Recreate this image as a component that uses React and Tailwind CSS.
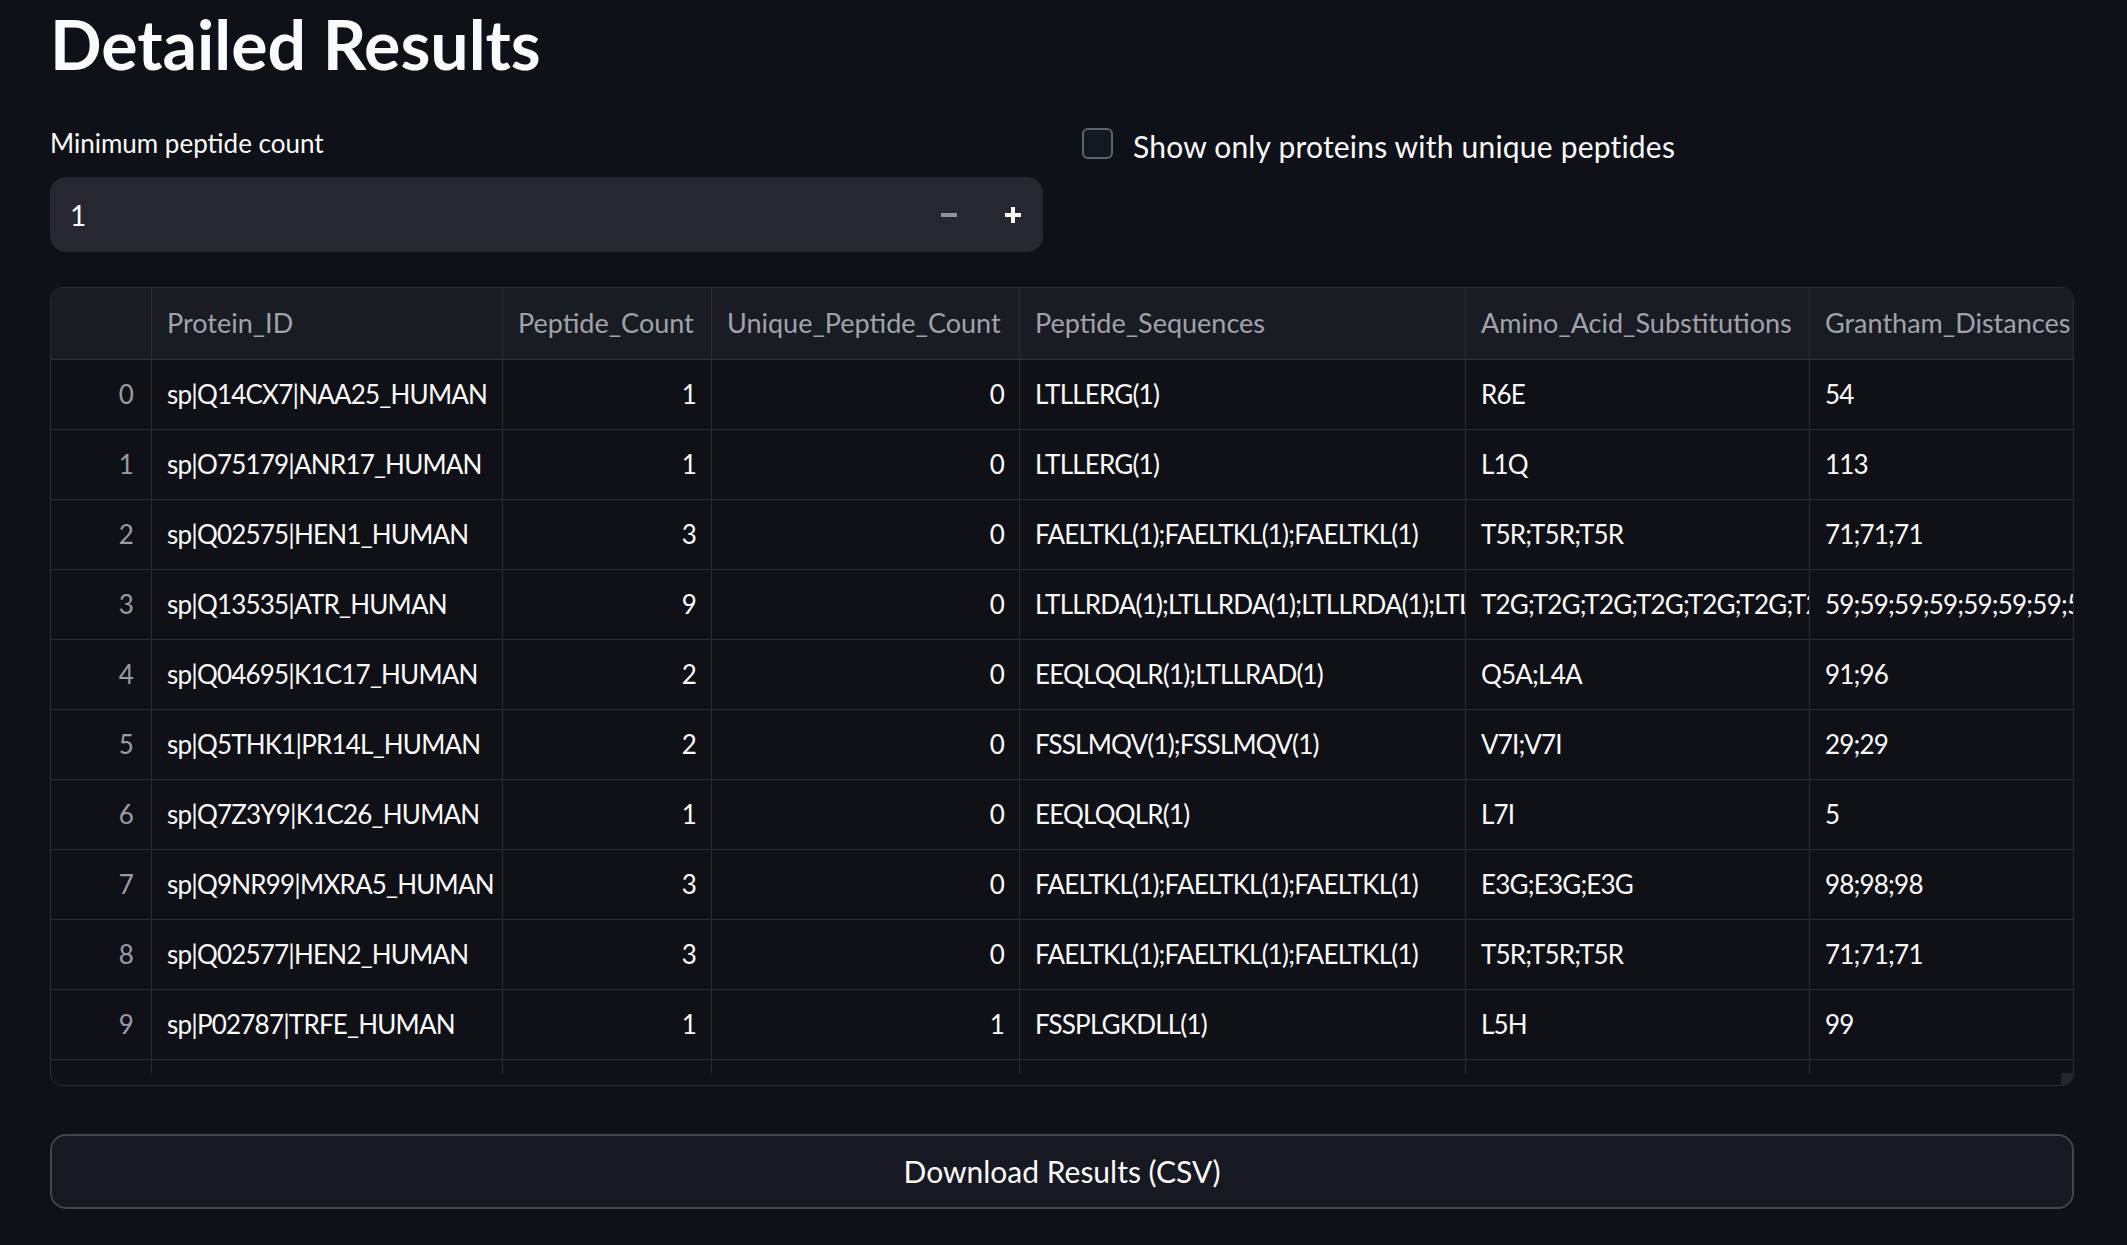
import React from 'react';

const COLUMNS = [
  { key: 'idx', label: '', width: 'w-[101px]', align: 'right' },
  { key: 'protein', label: 'Protein_ID', width: 'w-[351px]' },
  { key: 'count', label: 'Peptide_Count', width: 'w-[209px]', align: 'right' },
  { key: 'unique', label: 'Unique_Peptide_Count', width: 'w-[308px]', align: 'right' },
  { key: 'seqs', label: 'Peptide_Sequences', width: 'w-[446px]' },
  { key: 'subs', label: 'Amino_Acid_Substitutions', width: 'w-[344px]' },
  { key: 'dist', label: 'Grantham_Distances', width: 'w-[263px]' },
];

const rep = (s, n, sep = ';') => Array(n).fill(s).join(sep);

const ROWS = [
  { protein: 'sp|Q14CX7|NAA25_HUMAN', count: 1, unique: 0, seqs: 'LTLLERG(1)', subs: 'R6E', dist: '54' },
  { protein: 'sp|O75179|ANR17_HUMAN', count: 1, unique: 0, seqs: 'LTLLERG(1)', subs: 'L1Q', dist: '113' },
  { protein: 'sp|Q02575|HEN1_HUMAN', count: 3, unique: 0, seqs: rep('FAELTKL(1)', 3), subs: rep('T5R', 3), dist: rep('71', 3) },
  { protein: 'sp|Q13535|ATR_HUMAN', count: 9, unique: 0, seqs: rep('LTLLRDA(1)', 9), subs: rep('T2G', 9), dist: rep('59', 9) },
  { protein: 'sp|Q04695|K1C17_HUMAN', count: 2, unique: 0, seqs: 'EEQLQQLR(1);LTLLRAD(1)', subs: 'Q5A;L4A', dist: '91;96' },
  { protein: 'sp|Q5THK1|PR14L_HUMAN', count: 2, unique: 0, seqs: rep('FSSLMQV(1)', 2), subs: 'V7I;V7I', dist: '29;29' },
  { protein: 'sp|Q7Z3Y9|K1C26_HUMAN', count: 1, unique: 0, seqs: 'EEQLQQLR(1)', subs: 'L7I', dist: '5' },
  { protein: 'sp|Q9NR99|MXRA5_HUMAN', count: 3, unique: 0, seqs: rep('FAELTKL(1)', 3), subs: rep('E3G', 3), dist: rep('98', 3) },
  { protein: 'sp|Q02577|HEN2_HUMAN', count: 3, unique: 0, seqs: rep('FAELTKL(1)', 3), subs: rep('T5R', 3), dist: rep('71', 3) },
  { protein: 'sp|P02787|TRFE_HUMAN', count: 1, unique: 1, seqs: 'FSSPLGKDLL(1)', subs: 'L5H', dist: '99' },
];

const Stepper = () => (
  <div className="flex items-center h-full">
    <button className="w-[68px] h-full flex items-center justify-center">
      <svg width="16" height="4" viewBox="0 0 16 4"><rect width="16" height="4" fill="#8e909b" /></svg>
    </button>
    <button className="w-[60px] h-full flex items-center justify-center">
      <svg width="16" height="16" viewBox="0 0 16 16">
        <rect x="0" y="6" width="16" height="4" fill="#fafafa" />
        <rect x="6" y="0" width="4" height="16" fill="#fafafa" />
      </svg>
    </button>
  </div>
);

const DataTable = () => (
  <div className="w-[2024px] rounded-[12px] border border-[#2b2d34] overflow-hidden bg-[#0f1117]">
    <div className="flex h-[72px] bg-[#1a1c23] border-b border-[#30323a]">
      {COLUMNS.map((c, i) => (
        <div
          key={c.key}
          className={`${c.width} shrink-0 flex items-center px-[15px] overflow-hidden whitespace-nowrap text-[27px] text-[#a0a3ac] ${i < COLUMNS.length - 1 ? 'border-r border-[#2b2d34]' : ''}`}
        >
          {c.label}
        </div>
      ))}
    </div>
    {ROWS.map((r, ri) => (
      <div key={ri} className="flex h-[70px] border-b border-[#2b2d34]">
        {COLUMNS.map((c, i) => {
          const val = c.key === 'idx' ? ri : r[c.key];
          return (
            <div
              key={c.key}
              className={`${c.width} shrink-0 flex items-center overflow-hidden whitespace-nowrap text-[26px] tracking-[-0.8px] ${c.key === 'idx' ? 'pl-[15px] pr-[18px] text-[#9a9ca5]' : 'px-[15px] text-[#fafafa]'} ${c.align === 'right' ? 'justify-end' : ''} ${i < COLUMNS.length - 1 ? 'border-r border-[#2b2d34]' : ''}`}
            >
              {val}
            </div>
          );
        })}
      </div>
    ))}
    <div className="flex h-[13px]">
      {COLUMNS.map((c, i) => (
        <div key={c.key} className={`${c.width} shrink-0 ${i < COLUMNS.length - 1 ? 'border-r border-[#2b2d34]' : ''}`} />
      ))}
    </div>
    <div className="flex h-[12px] justify-end">
      <div className="w-[12px] h-[12px] bg-[#24262c]" />
    </div>
  </div>
);

export default function App() {
  return (
    <div className="min-h-screen w-full bg-[#0e1117] text-[#fafafa] font-['Lato',sans-serif] pl-[50px] pt-[10px] pb-[36px]">
      <div className="w-[2024px]">
        <h2 className="text-[68px] leading-[67px] font-bold">Detailed Results</h2>

        <div className="mt-[51px] grid grid-cols-[993px_1fr] gap-x-[39px] items-start">
          <div className="pt-[3px]">
            <label className="block text-[26px] leading-[25px]">Minimum peptide count</label>
            <div className="mt-[21px] h-[75px] rounded-[16px] bg-[#262730] flex items-center justify-between">
              <span className="pl-[20px] text-[28px]">1</span>
              <Stepper />
            </div>
          </div>
          <div className="flex items-start gap-[20px]">
            <span className="w-[31px] h-[31px] rounded-[6px] border-2 border-[#5f636e] bg-[#151820] shrink-0" />
            <span className="mt-[3px] text-[30px] leading-[31px] tracking-[0.2px]">Show only proteins with unique peptides</span>
          </div>
        </div>

        <div className="mt-[35px]">
          <DataTable />
        </div>

        <button className="mt-[48px] w-[2024px] h-[75px] rounded-[16px] border-2 border-[#43454d] bg-[#161922] text-[30px] text-[#fafafa]">
          Download Results (CSV)
        </button>
      </div>
    </div>
  );
}
